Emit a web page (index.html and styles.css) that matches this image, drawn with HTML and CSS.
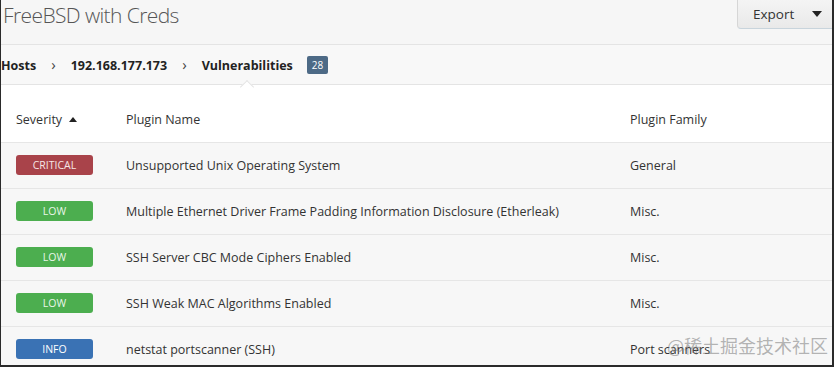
FILE: index.html
```html
<!DOCTYPE html>
<html lang="en">
<head>
  <meta charset="UTF-8" />
  <title>FreeBSD with Creds</title>
  <link rel="stylesheet" href="styles.css">
</head>
<body>
  <div class="frame">
    <div class="title-bar">
      <h1>FreeBSD with Creds</h1>
      <button type="button" class="export-btn">Export <span class="caret"></span></button>
    </div>

    <div class="crumbs">
      <span class="crumb">Hosts</span>
      <span class="sep">&rsaquo;</span>
      <span class="crumb">192.168.177.173</span>
      <span class="sep">&rsaquo;</span>
      <span class="crumb current">Vulnerabilities</span>
      <span class="count">28</span>
    </div>

    <table class="vulns">
      <thead>
        <tr>
          <th class="col-sev">Severity <span class="sort-up"></span></th>
          <th class="col-name">Plugin Name</th>
          <th>Plugin Family</th>
        </tr>
      </thead>
      <tbody>
        <tr>
          <td><span class="sev critical">Critical</span></td>
          <td>Unsupported Unix Operating System</td>
          <td>General</td>
        </tr>
        <tr>
          <td><span class="sev low">Low</span></td>
          <td>Multiple Ethernet Driver Frame Padding Information Disclosure (Etherleak)</td>
          <td>Misc.</td>
        </tr>
        <tr>
          <td><span class="sev low">Low</span></td>
          <td>SSH Server CBC Mode Ciphers Enabled</td>
          <td>Misc.</td>
        </tr>
        <tr>
          <td><span class="sev low">Low</span></td>
          <td>SSH Weak MAC Algorithms Enabled</td>
          <td>Misc.</td>
        </tr>
        <tr>
          <td><span class="sev info">Info</span></td>
          <td>netstat portscanner (SSH)</td>
          <td>Port scanners</td>
        </tr>
      </tbody>
    </table>

    <div class="watermark">@稀土掘金技术社区</div>
  </div>
</body>
</html>
```

FILE: styles.css
```css
html, body {
  margin: 0;
  padding: 0;
}
body {
  font-family: "Open Sans", Arial, sans-serif;
  font-size: 12.5px;
  color: #333;
  background: #fff;
}
.frame {
  position: relative;
  width: 834px;
  height: 367px;
  box-sizing: border-box;
  border-left: 1px solid #2a2a2a;
  border-right: 2px solid #2a2a2a;
  border-bottom: 2px solid #2a2a2a;
  overflow: hidden;
}
.title-bar {
  display: flex;
  justify-content: space-between;
  align-items: flex-start;
  height: 45px;
  box-sizing: border-box;
  background: #f6f6f6;
  border-bottom: 1px solid #e4e4e4;
}
.title-bar h1 {
  margin: 0;
  padding: 0 0 0 2px;
  font-weight: 300;
  font-size: 21px;
  letter-spacing: -0.6px;
  line-height: 31px;
  color: #555;
}
.export-btn {
  height: 29px;
  width: 95px;
  padding: 0 0 0 15px;
  text-align: left;
  font-family: inherit;
  font-size: 13.5px;
  color: #333;
  background: linear-gradient(#f4f4f4, #e9e9e9);
  border: 1px solid #d6d6d6;
  border-top: none;
  border-right: none;
  border-bottom-color: #c8d4dc;
  border-radius: 0 0 0 4px;
}
.caret {
  display: inline-block;
  margin-left: 14px;
  border-left: 5px solid transparent;
  border-right: 5px solid transparent;
  border-top: 6px solid #222;
  vertical-align: 2px;
}
.crumbs {
  position: relative;
  display: flex;
  align-items: center;
  height: 40px;
  padding-top: 1px;
  box-sizing: border-box;
  background: #f8f8f8;
  border-bottom: 1px solid #e4e4e4;
  font-weight: 700;
  font-size: 12.5px;
  color: #222;
}
.sep {
  font-weight: 400;
  font-size: 15px;
  margin: -2px 15px 0;
  color: #444;
}
.crumb.current {
  position: relative;
}
/* little notch under the active crumb */
.crumb.current::after {
  content: "";
  position: absolute;
  left: 50%;
  bottom: -18px;
  width: 9px;
  height: 9px;
  margin-left: -5px;
  background: #fff;
  border-left: 1px solid #e4e4e4;
  border-top: 1px solid #e4e4e4;
  transform: rotate(45deg);
}
.count {
  margin-left: 14px;
  padding: 0 5px;
  height: 18px;
  line-height: 18px;
  font-size: 10px;
  font-weight: 400;
  color: #fff;
  background: #4d6a86;
  border-radius: 2px;
}
.vulns {
  width: 100%;
  border-collapse: collapse;
  table-layout: fixed;
}
.vulns th {
  height: 57px;
  padding: 12px 0 0 0;
  text-align: left;
  font-weight: 400;
  color: #333;
  background: #fff;
  border-bottom: 1px solid #e6e6e6;
  box-sizing: border-box;
}
.vulns th.col-sev {
  width: 125px;
  padding-left: 15px;
}
.vulns th.col-name {
  width: 504px;
}
.sort-up {
  display: inline-block;
  margin-left: 4px;
  border-left: 4px solid transparent;
  border-right: 4px solid transparent;
  border-bottom: 5px solid #222;
  vertical-align: 2px;
}
.vulns td {
  height: 46px;
  padding: 0;
  background: #f7f7f7;
  border-bottom: 1px solid #e6e6e6;
  box-sizing: border-box;
  white-space: nowrap;
}
.vulns td:first-child {
  padding-left: 15px;
}
.sev {
  display: inline-block;
  width: 77px;
  height: 20px;
  line-height: 20px;
  text-align: center;
  font-size: 10.5px;
  text-transform: uppercase;
  border-radius: 3px;
  color: #fff;
  vertical-align: middle;
}
.sev.critical {
  background: #a9434a;
  color: #f6e6e6;
}
.sev.low {
  background: #4cae4f;
  color: #e9f6e9;
}
.sev.info {
  background: #3a72b4;
}
.watermark {
  position: absolute;
  right: 4px;
  bottom: 7px;
  font-family: "Noto Sans CJK SC", sans-serif;
  font-size: 18px;
  color: rgba(120, 120, 120, 0.55);
}
```
